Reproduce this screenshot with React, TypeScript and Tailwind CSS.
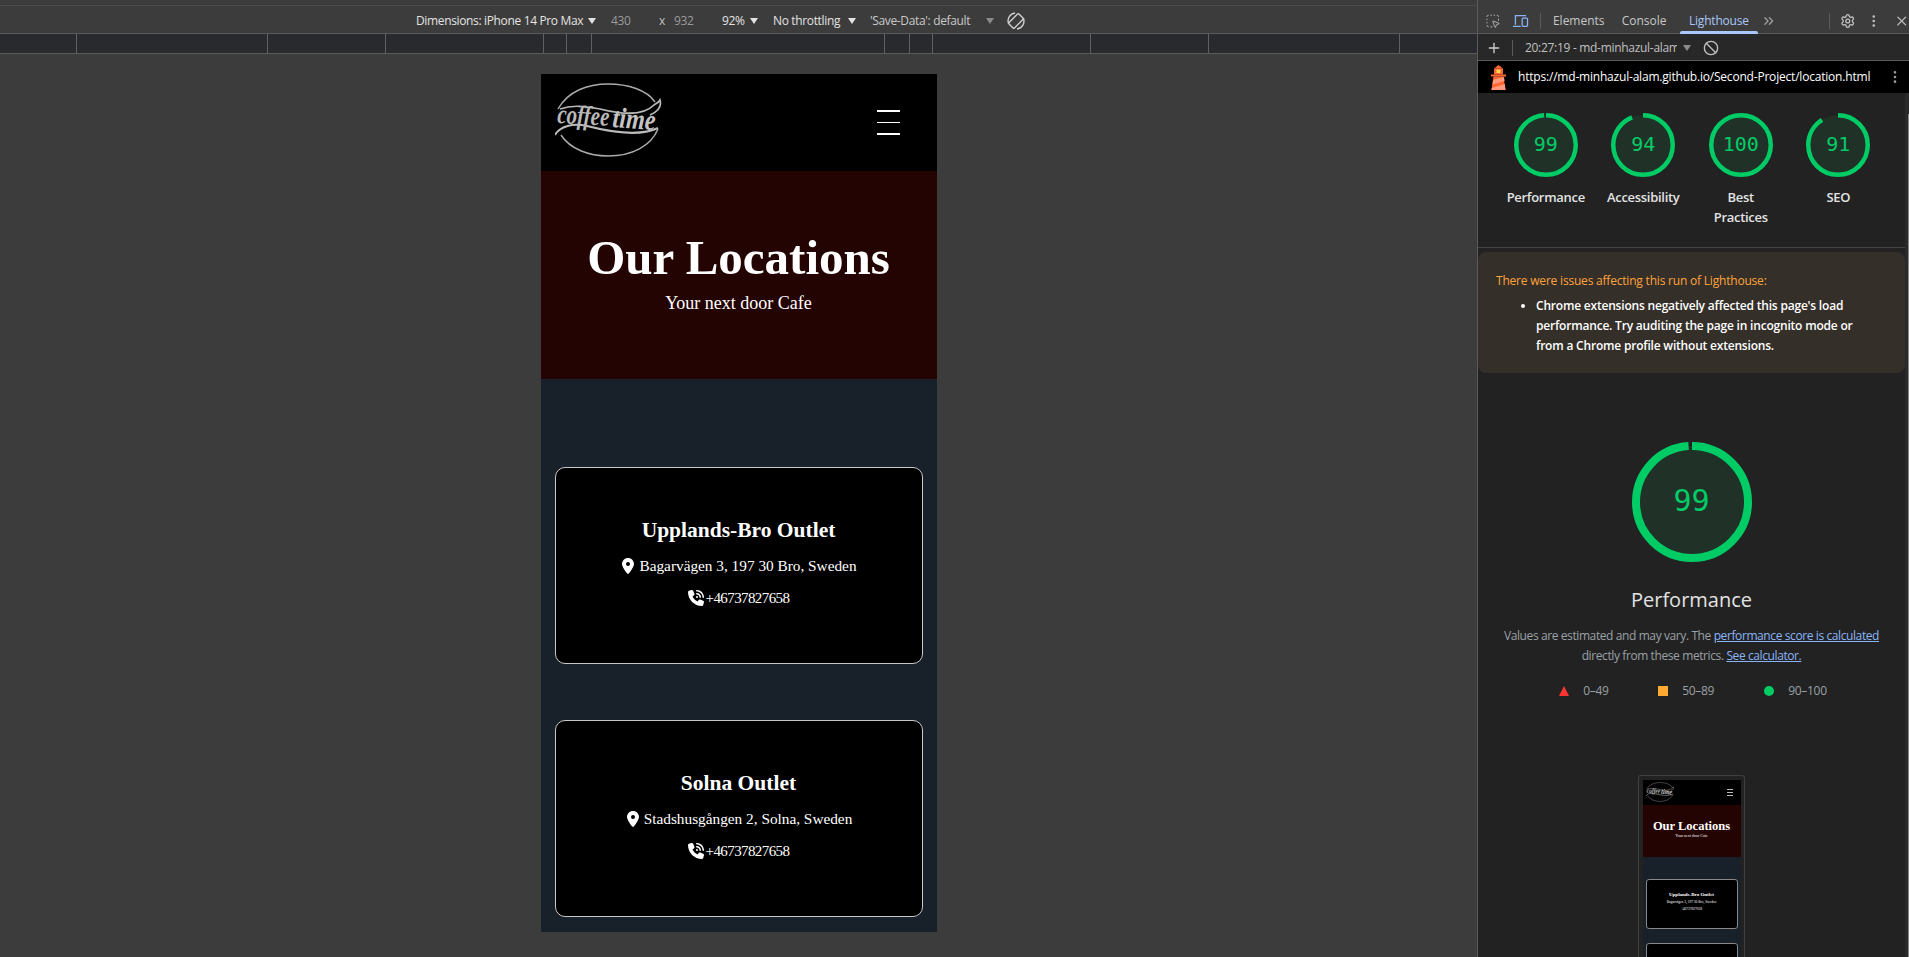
import { ChevronsRight, Ban, EllipsisVertical, Plus, Settings, SquareDashedMousePointer, X } from 'lucide-react'
import { FaLocationDot, FaPhoneVolume } from 'react-icons/fa6'

const ui = { fontFamily: '"Open Sans", "Noto Sans", sans-serif' }
const serif = { fontFamily: '"Liberation Serif", serif' }

const rulerMarks = [77, 191, 118, 158, 23, 25, 293, 25, 23, 158, 118, 191]

const locations = [
  { name: 'Upplands-Bro Outlet', address: 'Bagarvägen 3, 197 30 Bro, Sweden' },
  { name: 'Solna Outlet', address: 'Stadshusgången 2, Solna, Sweden' },
]

const scores = [
  { label: 'Performance', value: 99 },
  { label: 'Accessibility', value: 94 },
  { label: 'Best Practices', value: 100 },
  { label: 'SEO', value: 91 },
]

function Caret({ muted = false }: { muted?: boolean }) {
  return (
    <svg width="8" height="6" viewBox="0 0 8 6" className="shrink-0">
      <path d="M0 0h8L4 6z" fill={muted ? '#8a8a8a' : '#e3e3e3'} />
    </svg>
  )
}

function Gauge({ value, size, stroke, fontSize }: { value: number; size: number; stroke: number; fontSize: string }) {
  const r = (size - stroke) / 2
  return (
    <div className="relative shrink-0" style={{ width: size, height: size }}>
      <svg width={size} height={size} className="-rotate-90">
        <circle cx={size / 2} cy={size / 2} r={r} fill="#203228" />
        <circle
          cx={size / 2}
          cy={size / 2}
          r={r}
          fill="none"
          stroke="#00cc66"
          strokeWidth={stroke}
          pathLength={100}
          strokeDasharray={`${value} 100`}
        />
      </svg>
      <div
        className={`absolute inset-0 flex items-center justify-center pb-[3px] text-[#00cc66] ${fontSize}`}
        style={{ fontFamily: '"DejaVu Sans Mono", monospace' }}
      >
        {value}
      </div>
    </div>
  )
}

function Logo({ className }: { className: string }) {
  return (
    <svg viewBox="0 0 107 74" className={className}>
      <path d="M3 26C13 8 33 1 53 1c20 0 39 6 47 18" fill="none" stroke="#aaa" strokeWidth="1.5" />
      <path d="M5 26c14-5 28-2 40 0 20 5 42 8 54-4 3-2 5-3 6-5 2 7-3 12-10 15" fill="none" stroke="#b8b8b8" strokeWidth="1.7" />
      <path d="M0 52c5-9 18-12 32-9 24 6 52 11 71 2" fill="none" stroke="#bbb" strokeWidth="2" />
      <path d="M6 52c9 14 28 21 47 21 24 0 43-10 50-27" fill="none" stroke="#aaa" strokeWidth="1.5" />
      <text
        x="2"
        y="40"
        fontSize="27"
        fontStyle="italic"
        fontWeight="700"
        fill="#b8b8b8"
        textLength="52"
        lengthAdjust="spacingAndGlyphs"
        transform="rotate(3 2 40)"
        fontFamily='"Liberation Serif", serif'
      >
        coffee
      </text>
      <text
        x="57"
        y="44"
        fontSize="29"
        fontStyle="italic"
        fontWeight="700"
        fill="#c4c4c4"
        textLength="43"
        lengthAdjust="spacingAndGlyphs"
        transform="rotate(4 57 44)"
        fontFamily='"Liberation Serif", serif'
      >
        time
      </text>
    </svg>
  )
}

function LighthouseIcon() {
  return (
    <svg width="17" height="25" viewBox="0 0 17 25" className="shrink-0">
      <path d="M8.5 0L4 3.5h9z" fill="#f63" />
      <rect x="4" y="3.5" width="9" height="6" fill="#f63" />
      <rect x="6.5" y="4.5" width="4" height="3.5" fill="#ffd54a" />
      <rect x="1" y="9.5" width="15" height="2" fill="#f63" />
      <path d="M3.5 11.5h10l2 13.5h-14z" fill="#f63" />
      <path d="M3 15l11-3 .5 4-12 3.5zM1.8 23l13-4 .7 6h-14z" fill="#ff9a7d" />
    </svg>
  )
}

function Thumbnail() {
  return (
    <div className="flex w-[107px] flex-col rounded-t-[3px] border-x-[1.5px] border-t-[1.5px] border-[#3f3f3f] px-[3.5px] pt-[3.5px]">
      <div className="flex h-[25px] items-center justify-between bg-black pl-[3px] pr-[8px]">
        <Logo className="h-[20px] w-[28px]" />
        <div className="flex w-[6px] flex-col gap-[2px]">
          <div className="h-px bg-[#bbb]" />
          <div className="h-px bg-[#bbb]" />
          <div className="h-px bg-[#bbb]" />
        </div>
      </div>
      <div className="flex h-[52px] flex-col items-center bg-[#240303] pt-[14px] text-white" style={serif}>
        <div className="text-[12.5px] font-bold leading-[14px]">Our Locations</div>
        <div className="text-[4px] leading-[6px]">Your next door Cafe</div>
      </div>
      <div className="flex flex-col items-center gap-[14px] bg-[#18202a] px-[3px] pt-[22px]">
        {locations.map((l) => (
          <div key={l.name} className="flex h-[50px] w-full flex-col items-center justify-center rounded-[3px] border border-[#888] bg-black pb-[4px] text-white" style={serif}>
            <div className="text-[5px] font-bold leading-[8px]">{l.name}</div>
            <div className="text-[3.5px] leading-[7px]">{l.address}</div>
            <div className="text-[3.5px] leading-[7px]">+46737827658</div>
          </div>
        ))}
      </div>
    </div>
  )
}

export default function App() {
  return (
    <div className="flex h-[957px] w-[1909px] overflow-hidden bg-[#3c3c3c] text-[12px] text-[#e3e3e3]" style={ui}>
      <div className="flex w-[1477px] shrink-0 flex-col">
        <div className="h-[6px] border-b border-[#4a4a4a]" />
        <div className="flex h-[28px] items-center border-b border-[#5a5a5a] pl-[416px] pt-[2px] tracking-[-0.35px]">
          <span className="w-[166px] whitespace-nowrap">Dimensions: iPhone 14 Pro Max</span>
          <span className="ml-[6px]"><Caret /></span>
          <span className="ml-[15px] w-[30px] text-[#9a9a9a]">430</span>
          <span className="ml-[18px] w-[15px] text-[#c0c0c0]">x</span>
          <span className="w-[48px] text-[#9a9a9a]">932</span>
          <span className="w-[28px]">92%</span>
          <Caret />
          <span className="ml-[15px] w-[70px] whitespace-nowrap">No throttling</span>
          <span className="ml-[5px]"><Caret /></span>
          <span className="ml-[14px] w-[112px] whitespace-nowrap text-[#c8c8c8]">'Save-Data': default</span>
          <span className="ml-[4px]"><Caret muted /></span>
          <svg width="20" height="20" viewBox="0 0 20 20" className="ml-[12px]" fill="none" stroke="#d0d0d0" strokeWidth="1.4">
            <rect x="6.2" y="3" width="7.6" height="14" rx="1" transform="rotate(45 10 10)" />
            <path d="M2.5 12.5A8 8 0 0 1 9 2M17.5 7.5A8 8 0 0 1 11 18" />
          </svg>
        </div>
        <div className="flex h-[20px] border-b border-[#5a5a5a] bg-[#292a2d]">
          {rulerMarks.map((w, i) => (
            <div key={i} className="h-full shrink-0 border-r border-[#5f6064]" style={{ width: w }} />
          ))}
        </div>
        <div className="flex flex-1 justify-center pt-[20px]">
          <div className="flex h-[858px] w-[396px] flex-col bg-[#18202a] text-white" style={serif}>
            <header className="flex h-[97px] shrink-0 items-center justify-between bg-black pl-[14px] pr-[37px]">
              <Logo className="mb-[5px] h-[74px] w-[107px]" />
              <div className="flex w-[23px] flex-col gap-[10px]">
                <div className="h-[1.5px] bg-white" />
                <div className="h-[1.5px] bg-white" />
                <div className="h-[1.5px] bg-white" />
              </div>
            </header>
            <section className="flex h-[208px] shrink-0 flex-col items-center bg-[#240303] pt-[57px]">
              <h1 className="text-[49px] font-bold leading-[60px]">Our Locations</h1>
              <p className="mt-[3px] text-[18px] leading-[24px]">Your next door Cafe</p>
            </section>
            <section className="flex flex-col gap-[56px] px-[14px] pt-[88px]">
              {locations.map((l) => (
                <div key={l.name} className="flex h-[197px] flex-col items-center justify-center rounded-[10px] border border-[#c8c8c8] bg-black pb-[8px]">
                  <h2 className="text-[21.5px] font-bold leading-[28px]">{l.name}</h2>
                  <div className="mt-[12px] flex items-center gap-[3px] text-[15.3px] leading-[20px]">
                    <FaLocationDot className="text-[16px]" />
                    {l.address}
                  </div>
                  <div className="mt-[12px] flex items-center gap-[2px] text-[15px] leading-[20px] tracking-[-0.6px]">
                    <FaPhoneVolume className="text-[16px]" />
                    +46737827658
                  </div>
                </div>
              ))}
            </section>
          </div>
        </div>
      </div>

      <aside className="flex w-[432px] shrink-0 flex-col border-l border-[#5a5a5a]">
        <div className="flex h-[34px] shrink-0 items-center border-b border-[#5a5a5a] pl-[7px] pt-[8px]">
          <SquareDashedMousePointer size={16} strokeWidth={1.5} className="text-[#b0b0b0]" />
          <svg width="16" height="14" viewBox="0 0 16 14" className="ml-[13px]" fill="none" stroke="#8ab4f8" strokeWidth="1.3">
            <path d="M2.5 11V1.5h11M0 12.5h8" />
            <rect x="9.5" y="4" width="5.5" height="8.5" rx="1" />
          </svg>
          <div className="ml-[11px] h-[16px] w-px bg-[#5a5a5a]" />
          <span className="ml-[12px] w-[71px] text-[#c8c8c8]">Elements</span>
          <span className="w-[60px] text-[#c8c8c8]">Console</span>
          <div className="relative flex h-full w-[81px] items-center justify-center tracking-[-0.2px] text-[#a8c7fa]">
            Lighthouse
            <div className="absolute inset-x-0 bottom-[-1px] h-[3px] rounded-t-[2px] bg-[#a8c7fa]" />
          </div>
          <ChevronsRight size={16} className="ml-[3px] text-[#a0a0a0]" />
          <div className="ml-[52px] h-[16px] w-px bg-[#5a5a5a]" />
          <Settings size={16} className="ml-[10px] text-[#c0c0c0]" />
          <EllipsisVertical size={16} className="ml-[11px] text-[#c0c0c0]" />
          <X size={16} className="ml-[12px] text-[#c0c0c0]" />
        </div>
        <div className="flex h-[27px] shrink-0 items-center border-b border-[#5a5a5a] bg-[#282828] pl-[8px] pt-[2px]">
          <Plus size={16} className="text-[#d0d0d0]" />
          <div className="ml-[10px] h-[16px] w-px bg-[#5a5a5a]" />
          <span className="ml-[12px] w-[152px] overflow-hidden whitespace-nowrap tracking-[-0.3px] text-[#c0c0c0]">20:27:19 - md-minhazul-alam.github.io</span>
          <span className="ml-[6px]"><Caret muted /></span>
          <Ban size={16} className="ml-[12px] text-[#c0c0c0]" />
        </div>
        <div className="flex h-[32px] shrink-0 items-center justify-between bg-black pl-[12px] pr-[6px] text-[12px] text-white">
          <div className="flex items-center gap-[11px]">
            <LighthouseIcon />
            <span className="whitespace-nowrap tracking-[-0.2px]">https://md-minhazul-alam.github.io/Second-Project/location.html</span>
          </div>
          <EllipsisVertical size={16} className="text-[#9a9a9a]" />
        </div>

        <div className="flex min-h-0 flex-1">
          <div className="flex min-w-0 flex-1 flex-col items-center bg-[#222222]">
            <div className="flex h-[155px] w-full shrink-0 justify-center gap-[1px] border-b border-[#444] pl-[1px] pt-[20px]">
              {scores.map((s) => (
                <div key={s.label} className="flex w-[96.5px] flex-col items-center">
                  <Gauge value={s.value} size={64} stroke={4.5} fontSize="text-[20px]" />
                  <div className="mt-[10px] w-[80px] text-center text-[13px] font-semibold leading-[20px] tracking-[-0.3px] text-[#e3e3e3]">{s.label}</div>
                </div>
              ))}
            </div>
            <div className="mt-[4px] h-[121px] w-full shrink-0 rounded-[8px] bg-[#352f2a] pl-[18px] pr-[36px] pt-[19px]">
              <p className="text-[12px] leading-[20px] tracking-[-0.2px] text-[#ffa33a]">There were issues affecting this run of Lighthouse:</p>
              <ul className="mt-[5px] list-disc pl-[40px] text-[12px] font-semibold leading-[20px] tracking-[-0.2px] text-white">
                <li>Chrome extensions negatively affected this page's load performance. Try auditing the page in incognito mode or from a Chrome profile without extensions.</li>
              </ul>
            </div>
            <div className="mt-[69px] shrink-0">
              <Gauge value={99} size={120} stroke={8} fontSize="text-[30px]" />
            </div>
            <div className="mt-[25px] text-[20px] leading-[26px] text-[#e3e3e3]">Performance</div>
            <p className="mt-[13px] w-[400px] text-center text-[12px] leading-[20px] tracking-[-0.4px] text-[#9aa0a6]">
              Values are estimated and may vary. The <a className="text-[#8ab4f8] underline">performance score is calculated</a> directly from these metrics. <a className="text-[#8ab4f8] underline">See calculator.</a>
            </p>
            <div className="mt-[15px] flex h-[20px] shrink-0 items-center pl-[3px] text-[12px] tracking-[-0.3px] text-[#9aa0a6]">
              <svg width="10" height="10" viewBox="0 0 10 10"><path d="M5 0l5 10H0z" fill="#ff3333" /></svg>
              <span className="ml-[14px] w-[75px]">0–49</span>
              <div className="h-[10px] w-[10px] bg-[#ffaa33]" />
              <span className="ml-[14px] w-[82px]">50–89</span>
              <div className="h-[10px] w-[10px] rounded-full bg-[#00cc66]" />
              <span className="ml-[14px]">90–100</span>
            </div>
            <div className="mt-[74px] shrink-0">
              <Thumbnail />
            </div>
          </div>
          <div className="flex w-[4px] shrink-0 justify-end bg-[#2a2a2a] pt-[21px]">
            <div className="h-full w-[1px] bg-[#8a8a8a]" />
          </div>
        </div>
      </aside>
    </div>
  )
}
